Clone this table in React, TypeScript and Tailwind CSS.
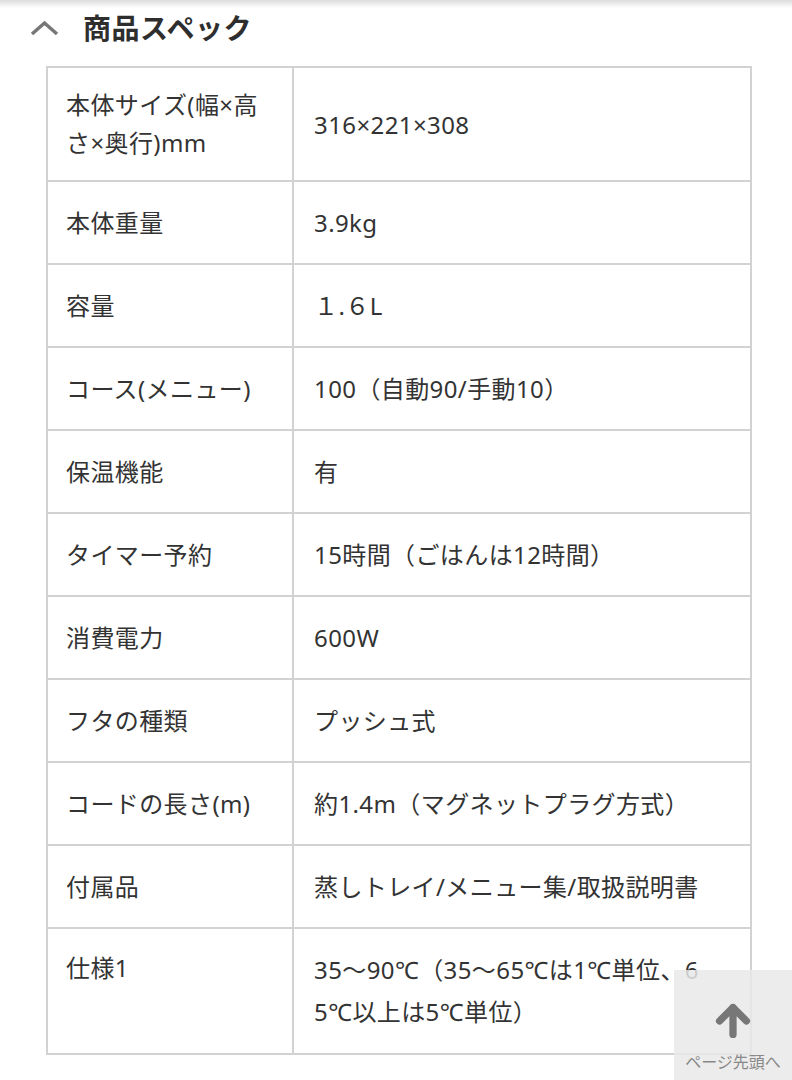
import { ArrowUp } from 'lucide-react';

const specs: { label: string; value: string }[] = [
  { label: '本体サイズ(幅×高さ×奥行)mm', value: '316×221×308' },
  { label: '本体重量', value: '3.9kg' },
  { label: '容量', value: '１.６L' },
  { label: 'コース(メニュー)', value: '100（自動90/手動10）' },
  { label: '保温機能', value: '有' },
  { label: 'タイマー予約', value: '15時間（ごはんは12時間）' },
  { label: '消費電力', value: '600W' },
  { label: 'フタの種類', value: 'プッシュ式' },
  { label: 'コードの長さ(m)', value: '約1.4m（マグネットプラグ方式）' },
  { label: '付属品', value: '蒸しトレイ/メニュー集/取扱説明書' },
  { label: '仕様1', value: '35～90℃（35～65℃は1℃単位、65℃以上は5℃単位）' },
];

const font = { fontFamily: "'Noto Sans', 'Noto Sans CJK JP', sans-serif" };

export default function App() {
  return (
    <div className="relative w-[792px] h-[1080px] overflow-hidden bg-white text-[#333]" style={font}>
      {/* header shadow */}
      <div className="h-[8px] bg-gradient-to-b from-[#dcdcdc] to-white" />

      {/* section title */}
      <div className="flex items-center h-[40px] pl-[30px]">
        <svg width="29" height="16" viewBox="0 0 29 16" className="mr-[24px]">
          <polyline points="2,14 14.5,3 27,14" fill="none" stroke="#777" strokeWidth="3.5" />
        </svg>
        <h2 className="text-[28px] font-bold tracking-[0.5px] text-[#2e2e2e]">商品スペック</h2>
      </div>

      {/* spec table */}
      <table className="mt-[18px] ml-[46px] w-[706px] border-collapse text-[24px] tracking-[0.4px]">
        <tbody>
          {specs.map((s, i) => {
            const first = i === 0;
            const last = i === specs.length - 1;
            return (
              <tr key={s.label}>
                <td
                  className={`w-[246px] border-2 border-[#d2d2d2] pl-[18px] pr-[10px] ${
                    first ? 'py-[18px] leading-[38px] align-middle' : last ? 'pt-[18px] pb-[20px] leading-[41px] align-top' : 'py-[20px] leading-[41px] align-middle'
                  }`}
                >
                  {s.label}
                </td>
                <td
                  className={`border-2 border-[#d2d2d2] pl-[20px] align-middle ${
                    last ? 'py-[20px] pr-[36px] leading-[42px] break-all' : 'py-[20px] pr-[16px] leading-[41px]'
                  }`}
                >
                  {s.value}
                </td>
              </tr>
            );
          })}
        </tbody>
      </table>

      {/* back to top */}
      <div className="absolute left-[674px] top-[970px] w-[118px] h-[110px] bg-[#e9e9e9]/85 flex flex-col items-center">
        <ArrowUp size={46} strokeWidth={3.8} className="mt-[28px] text-[#777]" />
        <span className="mt-[10px] text-[16px] leading-none text-[#888] whitespace-nowrap">ページ先頭へ</span>
      </div>
    </div>
  );
}
